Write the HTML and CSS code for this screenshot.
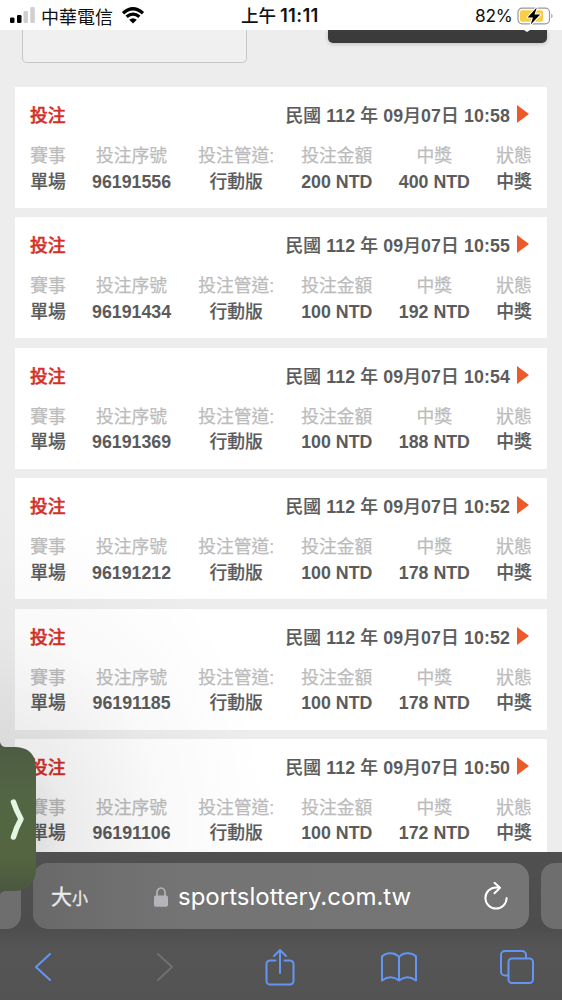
FILE: index.html
```
<!DOCTYPE html>
<html lang="zh-Hant">
<head>
<meta charset="utf-8">
<title>投注</title>
<link rel="stylesheet" href="styles.css">
</head>
<body>
<div class="phone">
  <header class="status">
    <div class="carrier">
      <svg class="signal" width="25" height="16" viewBox="0 0 25 16"><rect x="0" y="10.5" width="4.5" height="5.5" rx="1.3"/><rect x="7" y="8" width="4.5" height="8" rx="1.3"/><rect class="off" x="13.5" y="4" width="4.5" height="12" rx="1.3"/><rect class="off" x="20.300" y="0" width="4.500" height="16" rx="1.300"/></svg>
      <span class="carrier-name">中華電信</span>
      <svg class="wifi" width="24" height="17" viewBox="0 0 24 17"><path d="M2 6.200Q12-2.600 22 6.200M5.600 9.800Q12 4.400 18.400 9.800"/><path class="dot" d="M8.200 12.800Q12 9.600 15.800 12.800L12 16.600Z"/></svg>
    </div>
    <div class="clock">上午<span>11:11</span></div>
    <div class="power">
      <span>82%</span>
      <svg width="37" height="20" viewBox="0 0 37 20"><rect x="1" y="2.200" width="31.500" height="15.600" rx="4" fill="#fff" stroke="#999" stroke-width="1.200"/><rect x="3" y="4.200" width="23" height="11.600" rx="2" fill="#f7ce46"/><path d="M34.300 7.500q2.600 2.500 0 5z" fill="#999"/><path d="M19.800 1.500 10.600 11.400h5.400l-2.300 7L23.200 8.600h-5.700z" fill="#000" stroke="#fff" stroke-width="2.200" paint-order="stroke" stroke-linejoin="round"/></svg>
    </div>
  </header>

  <main class="page">
    <div class="filters">
      <div class="field"></div>
      <div class="submit"><i></i></div>
    </div>
    <div class="list">
      <article class="card">
        <div class="head"><span class="kind">投注</span><span class="date">民國 <b>112</b> 年 <b>09</b>月<b>07</b>日 <b>10:58</b></span><i class="arrow"></i></div>
        <div class="cols">
          <div class="c2"><em>賽事</em><span>單場</span></div><div class="c-id"><em>投注序號</em><b>96191556</b></div><div class="c-via"><em>投注管道:</em><span>行動版</span></div><div class="c-amt"><em>投注金額</em><b>200 NTD</b></div><div class="c-amt"><em>中獎</em><b>400 NTD</b></div><div class="c2"><em>狀態</em><span>中獎</span></div>
        </div>
      </article>
      <article class="card">
        <div class="head"><span class="kind">投注</span><span class="date">民國 <b>112</b> 年 <b>09</b>月<b>07</b>日 <b>10:55</b></span><i class="arrow"></i></div>
        <div class="cols">
          <div class="c2"><em>賽事</em><span>單場</span></div><div class="c-id"><em>投注序號</em><b>96191434</b></div><div class="c-via"><em>投注管道:</em><span>行動版</span></div><div class="c-amt"><em>投注金額</em><b>100 NTD</b></div><div class="c-amt"><em>中獎</em><b>192 NTD</b></div><div class="c2"><em>狀態</em><span>中獎</span></div>
        </div>
      </article>
      <article class="card">
        <div class="head"><span class="kind">投注</span><span class="date">民國 <b>112</b> 年 <b>09</b>月<b>07</b>日 <b>10:54</b></span><i class="arrow"></i></div>
        <div class="cols">
          <div class="c2"><em>賽事</em><span>單場</span></div><div class="c-id"><em>投注序號</em><b>96191369</b></div><div class="c-via"><em>投注管道:</em><span>行動版</span></div><div class="c-amt"><em>投注金額</em><b>100 NTD</b></div><div class="c-amt"><em>中獎</em><b>188 NTD</b></div><div class="c2"><em>狀態</em><span>中獎</span></div>
        </div>
      </article>
      <article class="card">
        <div class="head"><span class="kind">投注</span><span class="date">民國 <b>112</b> 年 <b>09</b>月<b>07</b>日 <b>10:52</b></span><i class="arrow"></i></div>
        <div class="cols">
          <div class="c2"><em>賽事</em><span>單場</span></div><div class="c-id"><em>投注序號</em><b>96191212</b></div><div class="c-via"><em>投注管道:</em><span>行動版</span></div><div class="c-amt"><em>投注金額</em><b>100 NTD</b></div><div class="c-amt"><em>中獎</em><b>178 NTD</b></div><div class="c2"><em>狀態</em><span>中獎</span></div>
        </div>
      </article>
      <article class="card">
        <div class="head"><span class="kind">投注</span><span class="date">民國 <b>112</b> 年 <b>09</b>月<b>07</b>日 <b>10:52</b></span><i class="arrow"></i></div>
        <div class="cols">
          <div class="c2"><em>賽事</em><span>單場</span></div><div class="c-id"><em>投注序號</em><b>96191185</b></div><div class="c-via"><em>投注管道:</em><span>行動版</span></div><div class="c-amt"><em>投注金額</em><b>100 NTD</b></div><div class="c-amt"><em>中獎</em><b>178 NTD</b></div><div class="c2"><em>狀態</em><span>中獎</span></div>
        </div>
      </article>
      <article class="card">
        <div class="head"><span class="kind">投注</span><span class="date">民國 <b>112</b> 年 <b>09</b>月<b>07</b>日 <b>10:50</b></span><i class="arrow"></i></div>
        <div class="cols">
          <div class="c2"><em>賽事</em><span>單場</span></div><div class="c-id"><em>投注序號</em><b>96191106</b></div><div class="c-via"><em>投注管道:</em><span>行動版</span></div><div class="c-amt"><em>投注金額</em><b>100 NTD</b></div><div class="c-amt"><em>中獎</em><b>172 NTD</b></div><div class="c2"><em>狀態</em><span>中獎</span></div>
        </div>
      </article>
    </div>
    <div class="shade"></div>
  </main>

  <footer class="browser">
    <div class="tabs">
      <div class="side left"></div>
      <div class="address">
        <span class="size">大<small>小</small></span>
        <div class="host"><svg width="14" height="20" viewBox="0 0 14 20"><path d="M3 9V5.500a4 4.500 0 0 1 8 0V9" fill="none" stroke="#b5b4bb" stroke-width="1.700"/><rect y="8.500" width="14" height="11.300" rx="1.800" fill="#b5b4bb"/></svg><span>sportslottery.com.tw</span></div>
        <svg class="reload" width="24" height="28" viewBox="0 0 24 28"><path d="M14.500 5.400H12A10.600 10.600 0 1 0 22.600 16M10.500 .8l5.500 5-5.500 5.500"/></svg>
      </div>
      <div class="side right"></div>
    </div>
    <nav class="tools">
      <svg width="16" height="28" viewBox="0 0 16 28"><path d="M15 1 1 14l14 13"/></svg>
      <svg class="disabled" width="16" height="28" viewBox="0 0 16 28"><path d="m1 1 14 13L1 27"/></svg>
      <svg width="30" height="38" viewBox="0 0 30 38"><path d="M10.500 12.500H5a3.500 3.500 0 0 0-3.500 3.500v17A3.500 3.500 0 0 0 5 36.500h20a3.500 3.500 0 0 0 3.500-3.500V16a3.500 3.500 0 0 0-3.500-3.500h-5.500M15 25V2M9 8l6-6 6 6"/></svg>
      <svg width="36" height="30" viewBox="0 0 36 30"><path d="M18 5C14 0 5 0 1 4.500V28.500Q10 22 18 28.500Q26 22 35 28.500V4.500C31 0 22 0 18 5V28.500"/></svg>
      <svg width="34" height="34" viewBox="0 0 34 34"><path d="M7.500 25.500H5A4 4 0 0 1 1 21.500V5a4 4 0 0 1 4-4h17a4 4 0 0 1 4 4v3"/><rect x="8.500" y="8.500" width="24.500" height="24.500" rx="3.500"/></svg>
    </nav>
  </footer>

  <svg class="drawer" width="37" height="154" viewBox="0 0 37 154"><defs><linearGradient id="g" x2="0" y2="1"><stop offset="0" stop-color="#4c5b42"/><stop offset=".35" stop-color="#536644"/><stop offset=".75" stop-color="#536641"/><stop offset="1" stop-color="#4a5640"/></linearGradient></defs><path d="M0 0Q1 5 6 5H16Q36 6 36 27V126Q36 147 16 149H6Q1 149 0 153Z" fill="url(#g)"/><path d="M13.500 60Q16 68 21 77Q16 86 13.500 95" fill="none" stroke="#e4f6df" stroke-width="5.500" stroke-linecap="round" stroke-linejoin="round"/></svg>
</div>
</body>
</html>
```
FILE: styles.css
```
* { box-sizing: border-box; }
body { margin: 0; font-family: "Liberation Sans", "Noto Sans CJK TC", sans-serif; }
em, i { font-style: normal; }
svg { display: block; flex: none; }
.phone { position: relative; width: 562px; height: 1000px; overflow: hidden; display: flex; flex-direction: column; background: #ededed; }

.status { height: 30px; flex: none; background: #fff; display: grid; grid-template-columns: 241px 1fr 87px; align-items: center; color: #111; }
.carrier { display: flex; align-items: center; padding-left: 10px; }
.signal .off { fill: #cfcfcf; }
.signal { margin-top: -1px; }
.carrier-name { font: 18px/30px "Noto Sans CJK TC", sans-serif; margin-left: 6px; }
.wifi { margin-left: 8px; fill: none; stroke: #000; stroke-width: 3.300; }
.wifi .dot { fill: #000; stroke: none; }
.clock { font: 500 17.500px/30px Inter, "Noto Sans CJK TC", sans-serif; white-space: nowrap; }
.clock span { font-weight: 600; margin-left: 4px; font-size: 18.500px; letter-spacing: .3px; }
.power { display: flex; align-items: center; gap: 4px; font: 17.300px/30px Inter, sans-serif; letter-spacing: -.2px; }

.page { position: relative; height: 822px; flex: none; overflow: hidden; padding: 0 15px; }
.filters { display: flex; justify-content: space-between; align-items: flex-start; height: 57px; padding-left: 7px; }
.field { width: 225px; height: 33px; border: 1.500px solid #c6c6c6; border-top: 0; border-radius: 0 0 5px 5px; background: #f0f0f0; }
.submit { width: 219px; height: 13px; border-radius: 0 0 5px 5px; background: #3b3b3b; box-shadow: 0 1px 4px #0003; display: flex; justify-content: flex-end; padding-right: 17px; }
.submit i { border: 3px solid transparent; border-top: 2px solid #fff; border-bottom: 0; height: 0; }
.list { display: flex; flex-direction: column; gap: 9.400px; }
.card { height: 121px; flex: none; background: #fff; padding: 15px 15px 0; font-size: 17.800px; font-weight: 500; color: #5b5b5b; }
.head { display: flex; align-items: center; height: 28px; line-height: 28px; }
.kind { color: #d32f27; -webkit-text-stroke: .45px #d32f27; }
.date { margin-left: auto; white-space: pre; letter-spacing: .1px; }
.arrow { margin: -4px 3px 0 7px; border: 9px solid transparent; border-left: 12px solid #ed5a29; border-right: 0; }
.cols { display: flex; justify-content: space-between; margin-top: 13px; }
.cols > div { display: flex; flex-direction: column; align-items: center; white-space: nowrap; }
.cols em, .cols b, .cols span { height: 25.500px; line-height: 26px; }
.cols em { color: #bcbcbc; font-weight: 400; -webkit-text-stroke: .25px #bcbcbc; }
.date, .cols span { -webkit-text-stroke: .2px #5b5b5b; }
.date b { -webkit-text-stroke: 0; }
.c2 { width: 36px; }
.c-id { width: 80px; }
.c-via { width: 78px; }
.c-amt { width: 72px; }
.shade { position: absolute; inset: 0; pointer-events: none; background: radial-gradient(ellipse 270px 330px at 0 800px, #00000030, #00000014 25%, #00000006 60%, transparent); }

.browser { height: 148px; flex: none; background: linear-gradient(#505050, #4d4d4d 50%, #555 65%, #535353); }
.tabs { display: flex; justify-content: space-between; padding-top: 11px; height: 77px; }
.side { width: 21px; height: 66px; background: #6e6e6e; }
.left { border-radius: 0 14px 14px 0; }
.right { border-radius: 14px 0 0 14px; }
.address { width: 496px; height: 66px; margin: 0 12px; border-radius: 15px; background: linear-gradient(90deg, #696969, #747474 30%, #757575); color: #fff; display: flex; align-items: center; padding: 0 21px 0 18px; }
.size { width: 103px; font: 21px/30px "Noto Sans CJK TC", sans-serif; color: #eee; -webkit-text-stroke: .3px #eee; }
.size small { font-size: 16px; }
.host { display: flex; align-items: center; gap: 10px; font: 24px/36px Inter, sans-serif; flex: 1; padding-top: 2px; }
.host span { letter-spacing: 0; }
.reload { fill: none; stroke: #fff; stroke-width: 2; stroke-linecap: round; stroke-linejoin: round; }
.tools { display: grid; grid-template-columns: repeat(5, 118.500px); justify-items: center; align-items: center; height: 71px; margin-left: -16px; padding-top: 5px; fill: none; stroke: #6295f4; stroke-width: 2; stroke-linecap: round; stroke-linejoin: round; }
.disabled { stroke: #707070; margin-left: 7px; }
.drawer { position: absolute; left: 0; top: 742px; }
```
